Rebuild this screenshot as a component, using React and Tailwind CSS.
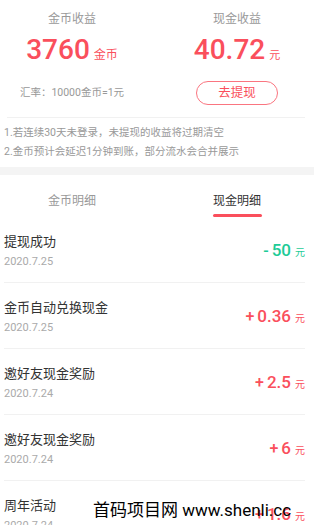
const ROWS = [
  { title: "提现成功", date: "2020.7.25", sign: "-", amount: "50", minus: true },
  { title: "金币自动兑换现金", date: "2020.7.25", sign: "+", amount: "0.36" },
  { title: "邀好友现金奖励", date: "2020.7.24", sign: "+", amount: "2.5" },
  { title: "邀好友现金奖励", date: "2020.7.24", sign: "+", amount: "6" },
  { title: "周年活动", date: "2020.7.24", sign: "+", amount: "1.6" },
];

function Row({ row }) {
  const color = row.minus ? "text-[#1ecb97]" : "text-[#fa4f5c]";
  return (
    <div className="flex h-[66px] items-center justify-between border-b border-[#f1f1f1]">
      <div className="flex h-full flex-col pt-[16px]">
        <div className="text-[13px] leading-[18px] text-[#333]">{row.title}</div>
        <div className="mt-[3px] text-[11px] leading-[16px] text-[#aaa]">{row.date}</div>
      </div>
      <div className={`mt-[2px] flex items-baseline ${color}`}>
        <span className="mr-[3px] text-[16px] font-medium">{row.sign}</span>
        <span className="text-[17px] font-medium">{row.amount}</span>
        <span className="ml-[4px] text-[10px]">元</span>
      </div>
    </div>
  );
}

export default function App() {
  return (
    <div
      className="relative h-[525px] w-[314px] overflow-hidden bg-white"
      style={{ fontFamily: 'Roboto, "Noto Sans CJK SC", sans-serif' }}
    >
      {/* Summary */}
      <div className="flex h-[117px] pt-[10px]">
        <div className="flex w-[144px] flex-col items-center">
          <div className="text-[12px] leading-[18px] text-[#999]">金币收益</div>
          <div className="mt-[8px] flex items-baseline leading-[28px] text-[#fa4f5c]">
            <span className="text-[28px] font-medium">3760</span>
            <span className="ml-[4px] text-[12px]">金币</span>
          </div>
          <div className="mt-[17px] text-[10.5px] leading-[14px] text-[#999]">汇率：10000金币=1元</div>
        </div>
        <div className="ml-[21px] flex w-[144px] flex-col items-center">
          <div className="text-[12px] leading-[18px] text-[#999]">现金收益</div>
          <div className="mt-[8px] flex items-baseline leading-[28px] text-[#fa4f5c]">
            <span className="text-[28px] font-medium">40.72</span>
            <span className="ml-[4px] text-[11px]">元</span>
          </div>
          <button className="mt-[11px] flex h-[24px] w-[82px] items-center justify-center rounded-full border border-[#fa7580] text-[12.5px] text-[#fa4f5c]">
            去提现
          </button>
        </div>
      </div>

      {/* Notes */}
      <div className="ml-[7px] mr-[9px] border-t border-[#f1f1f1]" />
      <div className="pl-[4px] pt-[5px] pb-[6px] text-[10.5px] leading-[19px] text-[#999]">
        <div>1.若连续30天未登录，未提现的收益将过期清空</div>
        <div>2.金币预计会延迟1分钟到账，部分流水会合并展示</div>
      </div>
      <div className="h-[8px] bg-[#f4f4f4]" />

      {/* Tabs */}
      <div className="flex h-[42px] pt-[17px]">
        <div className="flex w-[144px] justify-center">
          <span className="text-[12px] leading-[18px] text-[#999]">金币明细</span>
        </div>
        <div className="ml-[21px] flex w-[144px] justify-center">
          <div className="flex flex-col items-center">
            <span className="text-[12px] leading-[18px] text-[#333]">现金明细</span>
            <div className="mt-[4px] h-[3px] w-[49px] rounded-full bg-[#fa4f5c]" />
          </div>
        </div>
      </div>

      {/* List */}
      <div className="pl-[4px] pr-[9px]">
        {ROWS.map((row, i) => (
          <Row key={i} row={row} />
        ))}
      </div>

      {/* Watermark */}
      <div className="absolute left-[93px] top-[498px] text-[17px] leading-[24px] text-black">
        首码项目网 www.shenli.cc
      </div>
    </div>
  );
}
